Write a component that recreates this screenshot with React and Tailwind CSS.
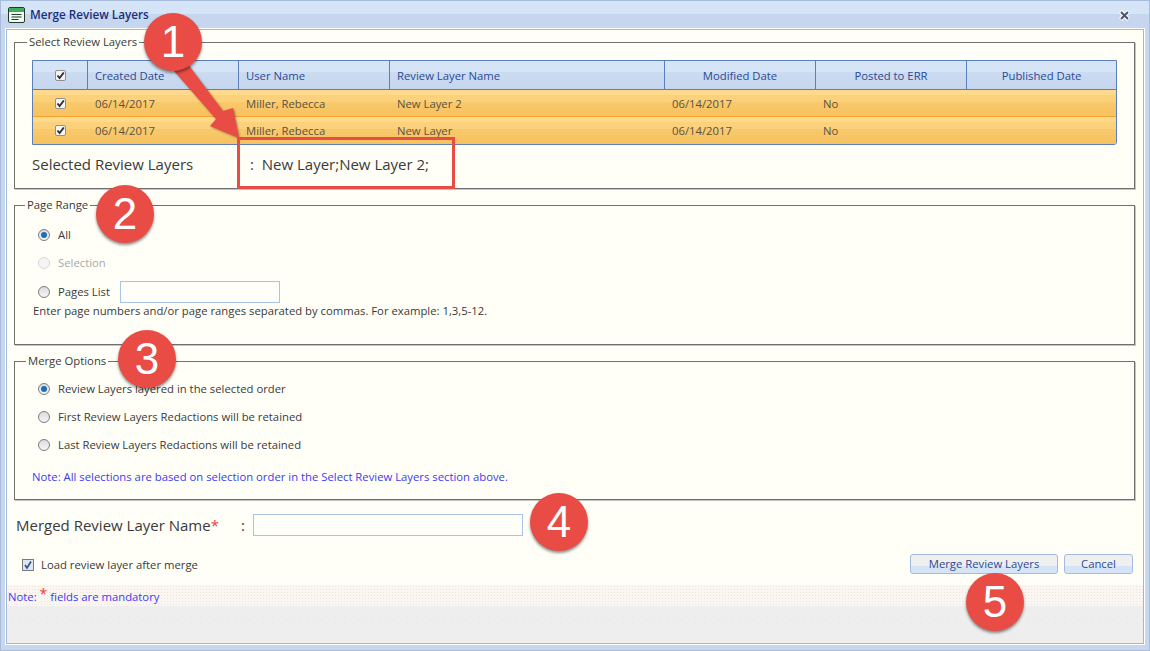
import React from "react";

const FONT = { fontFamily: '"Open Sans", "Noto Sans", sans-serif' };

const columns = [
  { label: "Created Date", width: "w-[151px]", align: "text-left pl-[7px]" },
  { label: "User Name", width: "w-[151px]", align: "text-left pl-[7px]" },
  { label: "Review Layer Name", width: "w-[275px]", align: "text-left pl-[7px]" },
  { label: "Modified Date", width: "w-[151px]", align: "text-center" },
  { label: "Posted to ERR", width: "w-[151px]", align: "text-center" },
  { label: "Published Date", width: "flex-1", align: "text-center" },
];

const rows = [
  ["06/14/2017", "Miller, Rebecca", "New Layer 2", "06/14/2017", "No", ""],
  ["06/14/2017", "Miller, Rebecca", "New Layer", "06/14/2017", "No", ""],
];

const GridCheck = () => (
  <span className="flex h-[11px] w-[11px] items-center justify-center rounded-[2px] border border-[#8f8f8f] bg-[#f4f4f4]">
    <svg width="9" height="9" viewBox="0 0 9 9">
      <path d="M1.5 4.5 L3.6 7 L7.8 1.5" fill="none" stroke="#2f2f2f" strokeWidth="1.9" />
    </svg>
  </span>
);

const Radio = ({ checked, disabled }) => (
  <span
    className={`flex h-[12px] w-[12px] shrink-0 items-center justify-center rounded-full border ${
      disabled
        ? "border-[#d8d8d8] bg-[#f5f5f5]"
        : "border-[#7d7d7d] bg-[linear-gradient(#dcdcdc,#f6f6f6)]"
    }`}
  >
    {checked && <span className="h-[6px] w-[6px] rounded-full bg-[#1b6fb8]" />}
  </span>
);

const RadioRow = ({ label, checked, disabled }) => (
  <div className="flex h-[28px] items-center gap-[8px]">
    <Radio checked={checked} disabled={disabled} />
    <span className={disabled ? "text-[#a8a8a8]" : "text-[#3a3a3a]"}>{label}</span>
  </div>
);

const Section = ({ title, legendClass, className, children }) => (
  <fieldset
    className={`ml-[7px] mr-[8px] rounded-none border border-[#707070] shadow-[1px_1px_0_#c4c4c4] ${className}`}
  >
    <legend className={`px-[2px] text-[11.3px] leading-[14px] text-[#3a3a3a] ${legendClass}`}>
      {title}
    </legend>
    {children}
  </fieldset>
);

const Badge = ({ n, className }) => (
  <div
    className={`absolute flex h-[58px] w-[58px] items-center justify-center rounded-full bg-[#e84c44] text-[44px] leading-none text-white shadow-[0_2px_3px_rgba(0,0,0,0.45)] ${className}`}
    style={{ fontFamily: '"Liberation Sans", sans-serif' }}
  >
    {n}
  </div>
);

export default function App() {
  return (
    <div
      className="relative flex h-[651px] w-[1150px] flex-col overflow-hidden border border-[#a8bcdc] bg-[#c6d7ee] text-[11.3px] text-[#3a3a3a]"
      style={FONT}
    >
      {/* title bar */}
      <div className="flex h-[28px] shrink-0 items-center bg-[linear-gradient(#d5e5f7_0,#d5e5f7_45%,#c6d6ee_45%,#c6d6ee_100%)] pl-[7px] pr-[19px]">
        <svg width="17" height="17" viewBox="0 0 17 17">
          <rect x="0.5" y="0.5" width="16" height="15" rx="1.5" fill="#f4fbf2" stroke="#1f3a26" />
          <rect x="1" y="1" width="15" height="4" fill="#3fae5a" />
          <path d="M3.5 7.5h10M3.5 10h10M3.5 12.5h7" stroke="#1f3a26" strokeWidth="1" />
        </svg>
        <span className="ml-[5px] text-[11.7px] font-semibold text-[#1c2f7c]">Merge Review Layers</span>
        <svg className="ml-auto" width="11" height="11" viewBox="0 0 11 11">
          <path d="M1.5 1.5 L9.5 9.5 M9.5 1.5 L1.5 9.5" stroke="#fff" strokeWidth="4" />
          <path d="M2 2 L9 9 M9 2 L2 9" stroke="#4a5568" strokeWidth="2" />
        </svg>
      </div>

      {/* dialog body */}
      <div className="mx-[5px] flex flex-1 flex-col border border-[#a3b6d6] bg-[#fffff8] shadow-[0_0_0_1px_#fff]">
        <div className="flex flex-col gap-[9px] pt-[5px]">
          <Section title="Select Review Layers" legendClass="ml-[12px]" className="h-[154px]">
            <div className="mx-[17px] mt-[11px] flex flex-col overflow-hidden rounded-br-[3px] border border-[#5b7fb8]">
              <div className="flex h-[29px] border-b border-[#5b7fb8] bg-[linear-gradient(#d5e5f7_0,#d5e5f7_40%,#cbdbf0_40%,#c6d6ee_100%)] text-[#2c4a94]">
                <div className="flex w-[55px] items-center justify-center border-r border-[#5b7fb8]">
                  <GridCheck />
                </div>
                {columns.map((col, i) => (
                  <div
                    key={col.label}
                    className={`${col.width} ${col.align} ${
                      i < columns.length - 1 ? "border-r border-[#5b7fb8]" : ""
                    } leading-[29px]`}
                  >
                    {col.label}
                  </div>
                ))}
              </div>
              {rows.map((row, r) => (
                <div
                  key={r}
                  className={`flex h-[27px] bg-[linear-gradient(#ffd98c_0,#ffd98c_20%,#fbd17c_20%,#fbd17c_45%,#f8c96b_45%,#f7c25f_100%)] text-[#5a5244] ${
                    r === 0 ? "border-b border-[#f5a12f]" : ""
                  }`}
                >
                  <div className="flex w-[55px] items-center justify-center">
                    <GridCheck />
                  </div>
                  {row.map((cell, i) => (
                    <div key={i} className={`${columns[i].width} pl-[7px] leading-[27px]`}>
                      {cell}
                    </div>
                  ))}
                </div>
              ))}
            </div>
            <div className="ml-[17px] mt-[8px] flex h-[22px] items-center text-[15px] text-[#3a3a3a]">
              <span className="w-[218px]">Selected Review Layers</span>
              <span>:&nbsp; New Layer;New Layer 2;</span>
            </div>
          </Section>

          <Section title="Page Range" legendClass="ml-[10px]" className="h-[147px]">
            <div className="ml-[23px] mt-[9px]">
              <RadioRow label="All" checked />
              <RadioRow label="Selection" disabled />
              <div className="flex h-[30px] items-center gap-[8px]">
                <Radio />
                <span>Pages List</span>
                <div className="ml-[2px] h-[22px] w-[160px] border border-[#a9c4e4] bg-[#fffffa]" />
              </div>
            </div>
            <p className="ml-[18px] mt-[-3px] leading-[14px]">
              Enter page numbers and/or page ranges separated by commas. For example: 1,3,5-12.
            </p>
          </Section>

          <Section title="Merge Options" legendClass="ml-[11px]" className="h-[146px]">
            <div className="ml-[23px] mt-[7px]">
              <RadioRow label="Review Layers layered in the selected order" checked />
              <RadioRow label="First Review Layers Redactions will be retained" />
              <RadioRow label="Last Review Layers Redactions will be retained" />
            </div>
            <p className="ml-[17px] mt-[11px] leading-[14px] text-[#3b3bf0]">
              Note: All selections are based on selection order in the Select Review Layers section above.
            </p>
          </Section>
        </div>

        <div className="mt-[14px] flex h-[22px] items-center pl-[9px]">
          <span className="w-[225px] whitespace-nowrap text-[15px]">
            Merged Review Layer Name<span className="text-[#f03c3c]">*</span>
          </span>
          <span className="w-[12px] text-[15px]">:</span>
          <div className="h-[22px] w-[270px] border border-[#a9c4e4] bg-[#fffffa]" />
        </div>

        <div className="mt-[18px] flex h-[22px] items-center pl-[15px] pr-[10px]">
          <span className="flex h-[12px] w-[12px] items-center justify-center border border-[#7a7a7a] bg-[#dfe6f2]">
            <svg width="10" height="10" viewBox="0 0 10 10">
              <path d="M2 5 L4 8 L8 1.5" fill="none" stroke="#2f5597" strokeWidth="1.7" />
            </svg>
          </span>
          <span className="ml-[7px]">Load review layer after merge</span>
          <button className="mb-[2px] ml-auto h-[20px] w-[148px] rounded-[3px] border border-[#a3bbe0] bg-[linear-gradient(#efefef_0,#efefef_60%,#d5e5f7_60%,#d5e5f7_100%)] text-[11.3px] text-[#2c4a94]">
            Merge Review Layers
          </button>
          <button className="mb-[2px] ml-[6px] h-[20px] w-[69px] rounded-[3px] border border-[#a3bbe0] bg-[linear-gradient(#efefef_0,#efefef_60%,#d5e5f7_60%,#d5e5f7_100%)] text-[11.3px] text-[#2c4a94]">
            Cancel
          </button>
        </div>

        <div className="mt-[9px] flex h-[21px] items-center bg-[#fbf6f1] bg-[radial-gradient(#efe3df_0.6px,transparent_0.6px)] bg-[length:3px_3px] pt-[1px] text-[#3b3bf0]">
          <span className="pl-[1px]">
            Note: <span className="align-[2px] text-[14px] leading-none text-[#f03c3c]">*</span> fields are mandatory
          </span>
        </div>
        <div className="flex-1 bg-[#eeeeee] bg-[radial-gradient(#dcebe6_0.5px,transparent_0.5px)] bg-[length:9px_7px]" />
      </div>
      <div className="h-[6px] shrink-0" />

      {/* callouts drawn over the dialog */}
      <svg
        className="pointer-events-none absolute left-0 top-0 drop-shadow-[1px_1px_1px_rgba(0,0,0,0.4)]"
        width="1150"
        height="651"
      >
        <path d="M173 70 L186 62 L222 110 L232 107 L238 137 L209 125 L215 118 Z" fill="#e84c44" />
      </svg>
      <div className="absolute left-[236px] top-[136px] h-[52px] w-[218px] border-[3px] border-[#e84c44]" />
      <Badge n="1" className="left-[143px] top-[12px]" />
      <Badge n="2" className="left-[95px] top-[184px]" />
      <Badge n="3" className="left-[117px] top-[329px]" />
      <Badge n="4" className="left-[529px] top-[492px]" />
      <Badge n="5" className="left-[965px] top-[572px]" />
    </div>
  );
}
